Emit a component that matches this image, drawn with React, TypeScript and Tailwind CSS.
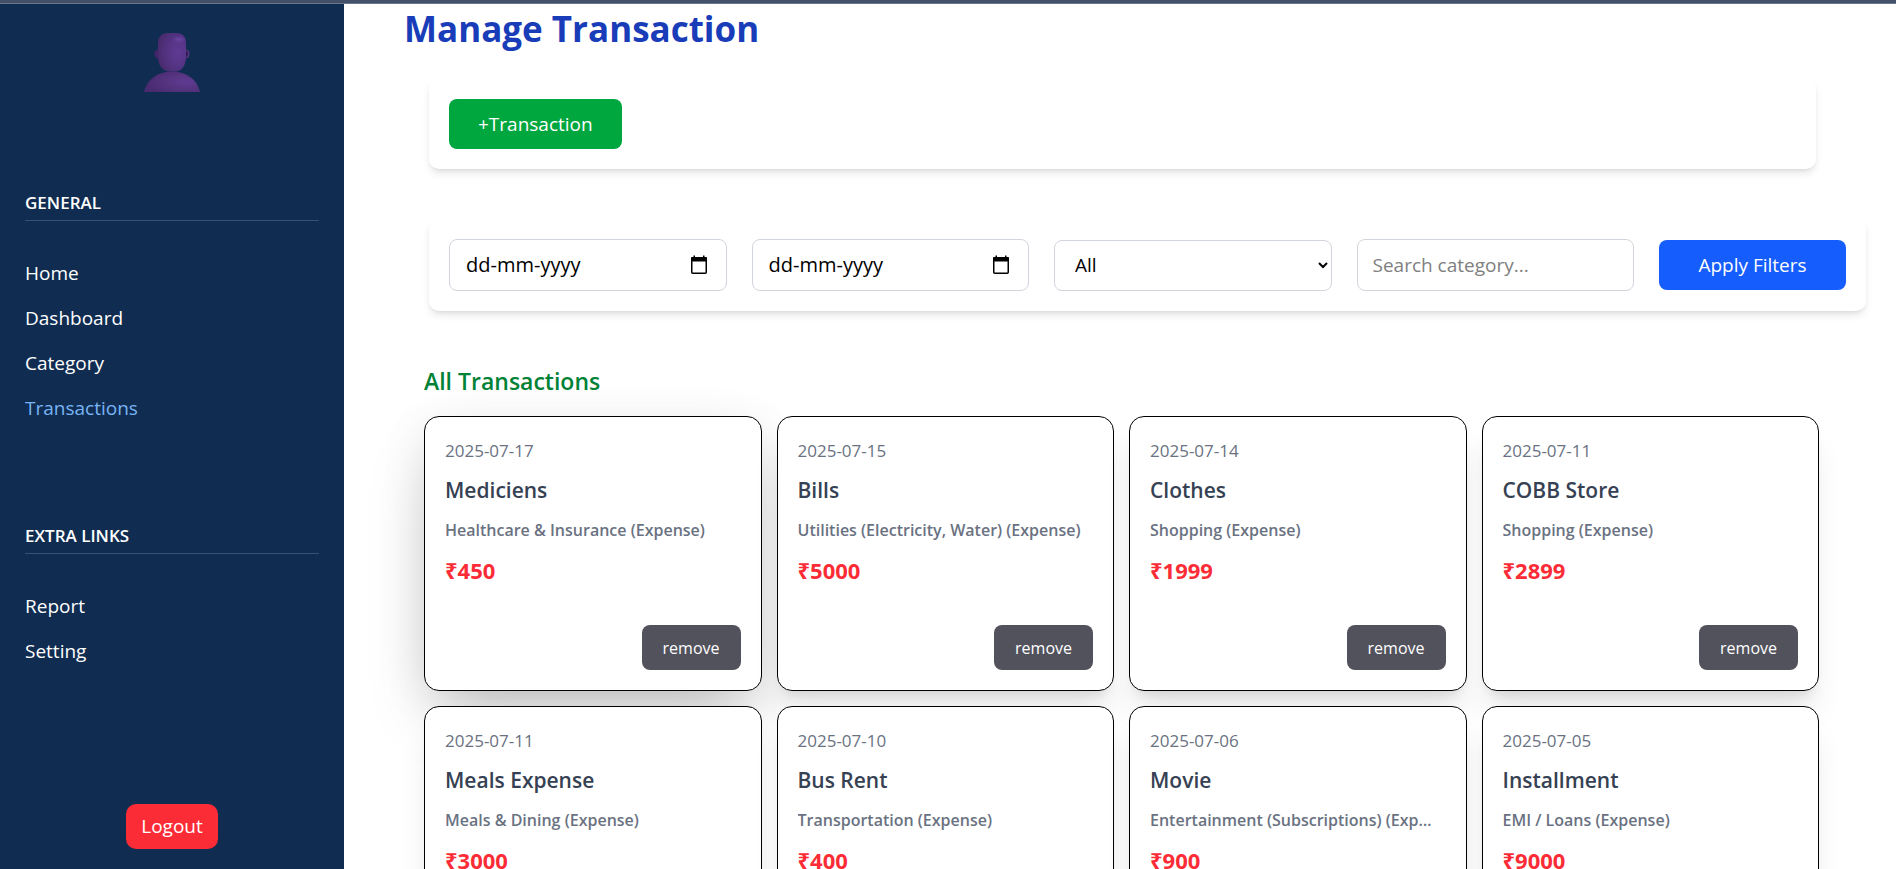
import React from "react";

type Transaction = {
  date: string;
  title: string;
  category: string;
  amount: number;
};

const transactions: Transaction[] = [
  { date: "2025-07-17", title: "Mediciens", category: "Healthcare & Insurance (Expense)", amount: 450 },
  { date: "2025-07-15", title: "Bills", category: "Utilities (Electricity, Water) (Expense)", amount: 5000 },
  { date: "2025-07-14", title: "Clothes", category: "Shopping (Expense)", amount: 1999 },
  { date: "2025-07-11", title: "COBB Store", category: "Shopping (Expense)", amount: 2899 },
  { date: "2025-07-11", title: "Meals Expense", category: "Meals & Dining (Expense)", amount: 3000 },
  { date: "2025-07-10", title: "Bus Rent", category: "Transportation (Expense)", amount: 400 },
  { date: "2025-07-06", title: "Movie", category: "Entertainment (Subscriptions) (Expense)", amount: 900 },
  { date: "2025-07-05", title: "Installment", category: "EMI / Loans (Expense)", amount: 9000 },
];

function Avatar() {
  return (
    <svg width="58" height="60" viewBox="0 0 58 60" role="img" aria-label="User avatar">
      <defs>
        <radialGradient id="head" cx="0.72" cy="0.5" r="0.75">
          <stop offset="0" stopColor="#5f3b93" />
          <stop offset="0.5" stopColor="#553485" />
          <stop offset="1" stopColor="#472a6c" />
        </radialGradient>
        <radialGradient id="body" cx="0.75" cy="0.5" r="0.75">
          <stop offset="0" stopColor="#5f3b93" />
          <stop offset="0.5" stopColor="#55347f" />
          <stop offset="1" stopColor="#482a70" />
        </radialGradient>
        <radialGradient id="shine">
          <stop offset="0" stopColor="#6a45a4" />
          <stop offset="1" stopColor="#6a45a4" stopOpacity="0" />
        </radialGradient>
      </defs>
      <ellipse cx="14.5" cy="22" rx="3" ry="4.2" fill="#41256a" />
      <ellipse cx="43.2" cy="22" rx="3.2" ry="4.2" fill="#553480" />
      <ellipse cx="42.8" cy="22" rx="1.9" ry="3" fill="#2a1850" />
      <path d="M1 60C4 47 15 39.500 29 39.500S54 47 57 60Z" fill="url(#body)" />
      <path d="M15 11C15 4 19 1 25 1h8c6 0 10 3 10 10v14c0 8-4 14-10 14.500h-7C19 39 15 33 15 25Z" fill="url(#head)" />
      <ellipse cx="36" cy="7.500" rx="7" ry="3.500" fill="url(#shine)" />
    </svg>
  );
}

function NavSection({ title, links, active }: { title: string; links: string[]; active?: string }) {
  return (
    <nav aria-label={title}>
      <h2 className="border-b border-[#3a5072] pb-0.5 text-[17px] leading-[30px] font-semibold text-white">{title}</h2>
      <ul className="mt-10 flex flex-col gap-5">
        {links.map((link) => (
          <li key={link} className="leading-[25px]">
            <a href="#" className={link === active ? "text-[#78b4f4]" : "text-white"}>
              {link}
            </a>
          </li>
        ))}
      </ul>
    </nav>
  );
}

function Sidebar() {
  return (
    <aside className="flex w-[344px] shrink-0 flex-col bg-[#102c51] px-[25px]">
      <div className="mt-[28px] flex justify-center">
        <Avatar />
      </div>
      <div className="mt-24">
        <NavSection title="GENERAL" links={["Home", "Dashboard", "Category", "Transactions"]} active="Transactions" />
      </div>
      <div className="mt-[100px]">
        <NavSection title="EXTRA LINKS" links={["Report", "Setting"]} />
      </div>
      <div className="mt-auto mb-5 flex justify-center">
        <button type="button" className="h-[45px] rounded-[10px] bg-[#fb2c36] px-[15px] text-white">
          Logout
        </button>
      </div>
    </aside>
  );
}

function DateField({ label }: { label: string }) {
  return (
    <div className="flex h-[52px] min-w-0 items-center rounded-lg border border-gray-300 pr-[18px] pl-4">
      <input
        type="text"
        aria-label={label}
        placeholder="dd-mm-yyyy"
        className="min-w-0 flex-1 bg-transparent text-[20px] outline-none placeholder:text-black"
      />
      <button type="button" aria-label={`Open ${label} picker`} className="shrink-0 text-black">
        <svg width="18" height="20" viewBox="0 0 18 20" className="block">
          <path d="M3.500 0.500h1.500v2H3.500zM13 0.500h1.500v2H13z" fill="currentColor" />
          <rect x="1.750" y="2.750" width="14.500" height="15.500" rx="1" fill="none" stroke="currentColor" strokeWidth="1.500" />
          <rect x="1" y="2" width="16" height="4.500" rx="1" fill="currentColor" />
        </svg>
      </button>
    </div>
  );
}

function TransactionCard({ item }: { item: Transaction }) {
  return (
    <article className="flex h-[275px] min-w-0 flex-col gap-[10px] rounded-[15px] border border-black bg-white px-5 pt-[21px] pb-5 shadow-[0_25px_31px_-6px_rgba(0,0,0,0.1),0_10px_12px_-7px_rgba(0,0,0,0.1)] first:shadow-[0_31px_62px_-15px_rgba(0,0,0,0.25),0_10px_50px_0_rgba(0,0,0,0.07)]">
      <time dateTime={item.date} className="text-[17px] leading-[25px] text-gray-500">
        {item.date}
      </time>
      <h3 className="truncate text-[21px] leading-[35px] font-semibold text-gray-700">{item.title}</h3>
      <p className="truncate pr-2 text-[16px] leading-[25px] font-semibold text-gray-500">{item.category}</p>
      <p className="text-[22px] leading-[35px] font-bold text-[#fb2c36]">₹{item.amount}</p>
      <button
        type="button"
        className="mt-auto h-[45px] self-end rounded-lg bg-[#52525c] px-[21px] text-[16px] text-white"
      >
        remove
      </button>
    </article>
  );
}

export default function App() {
  return (
    <div className="flex h-screen flex-col overflow-hidden bg-white font-['Open_Sans','Noto_Sans',sans-serif] text-[19px] text-black">
      <div className="h-1 shrink-0 border-b border-[#6a7689] bg-[#42506a]" />
      <div className="flex min-h-0 flex-1">
        <Sidebar />
        <main className="min-w-0 flex-1 overflow-y-auto pr-[30px] pl-[60px] [scrollbar-width:none]">
          <h1 className="text-[35px] leading-[50px] font-bold text-[#193cb8]">Manage Transaction</h1>

          <section className="mt-[25px] mr-[50px] ml-[25px] rounded-[10px] bg-white p-5 shadow-[0_5px_8px_-1px_rgba(0,0,0,0.1),0_3px_5px_-3px_rgba(0,0,0,0.1)]">
            <button type="button" className="h-[50px] rounded-lg bg-[#00a63e] px-[29px] text-white">
              +Transaction
            </button>
          </section>

          <form
            onSubmit={(event) => event.preventDefault()}
            className="mt-[50px] ml-[25px] grid grid-cols-[repeat(4,minmax(0,1fr))_187px] items-center gap-[25px] rounded-[10px] bg-white p-5 shadow-[0_5px_8px_-1px_rgba(0,0,0,0.1),0_3px_5px_-3px_rgba(0,0,0,0.1)]"
          >
            <DateField label="Start date" />
            <DateField label="End date" />
            <select aria-label="Type" className="h-[51px] min-w-0 rounded-lg border border-gray-300 bg-white px-4">
              <option>All</option>
              <option>Income</option>
              <option>Expense</option>
            </select>
            <input
              type="text"
              aria-label="Search category"
              placeholder="Search category..."
              className="h-[52px] min-w-0 rounded-lg border border-gray-300 px-[15px] placeholder:text-[#808080]"
            />
            <button type="submit" className="h-[50px] rounded-lg bg-[#155dfc] text-white">
              Apply Filters
            </button>
          </form>

          <section className="mt-[50px] mr-[47px] ml-5">
            <h2 className="text-[23px] leading-[40px] font-semibold text-[#008236]">All Transactions</h2>
            <div className="mt-[15px] grid grid-cols-4 gap-[15px]">
              {transactions.map((item) => (
                <TransactionCard key={`${item.date}-${item.title}`} item={item} />
              ))}
            </div>
          </section>
        </main>
      </div>
    </div>
  );
}
